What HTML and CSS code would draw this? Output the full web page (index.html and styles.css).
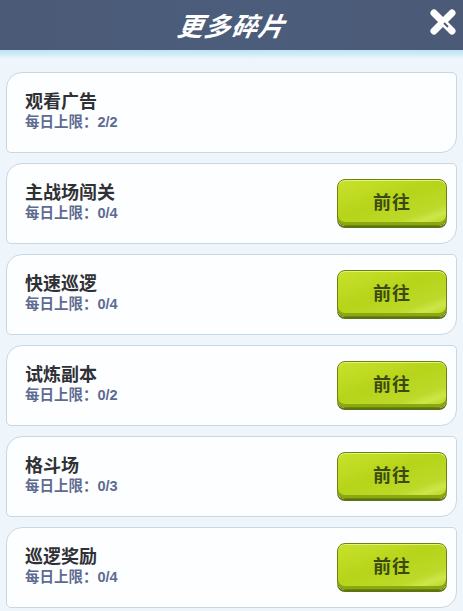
FILE: index.html
```html
<!DOCTYPE html>
<html lang="zh">
<head>
<meta charset="utf-8">
<link rel="stylesheet" href="styles.css">
</head>
<body>
<div class="panel">
  <header class="header">
    <h1 class="title">更多碎片</h1>
    <button class="close" aria-label="关闭">
      <svg width="30" height="28" viewBox="0 0 30 28">
        <path d="M6 5 L24 23" stroke="#fff" stroke-width="7" stroke-linecap="round"/>
        <path d="M24 5 L6 23" stroke="#fff" stroke-width="7" stroke-linecap="round"/>
        <path d="M16 15 L20 19" stroke="#4b5c7a" stroke-width="2"/>
      </svg>
    </button>
  </header>
  <div class="stripe"></div>
  <ul class="list">
    <li class="card">
      <div class="info"><div class="name">观看广告</div><div class="limit">每日上限：2/2</div></div>
    </li>
    <li class="card">
      <div class="info"><div class="name">主战场闯关</div><div class="limit">每日上限：0/4</div></div>
      <button class="go">前往</button>
    </li>
    <li class="card">
      <div class="info"><div class="name">快速巡逻</div><div class="limit">每日上限：0/4</div></div>
      <button class="go">前往</button>
    </li>
    <li class="card">
      <div class="info"><div class="name">试炼副本</div><div class="limit">每日上限：0/2</div></div>
      <button class="go">前往</button>
    </li>
    <li class="card">
      <div class="info"><div class="name">格斗场</div><div class="limit">每日上限：0/3</div></div>
      <button class="go">前往</button>
    </li>
    <li class="card">
      <div class="info"><div class="name">巡逻奖励</div><div class="limit">每日上限：0/4</div></div>
      <button class="go">前往</button>
    </li>
  </ul>
</div>
</body>
</html>
```

FILE: styles.css
```css
* { box-sizing: border-box; }
html, body { margin: 0; padding: 0; }
body {
  width: 463px;
  height: 611px;
  overflow: hidden;
  background: #eef5fb;
  font-family: "Noto Sans CJK SC", "Noto Sans", sans-serif;
}
.panel { display: flex; flex-direction: column; }
.header {
  position: relative;
  height: 50px;
  background: linear-gradient(90deg, #4a5a77 0%, #4c5d7b 50%, #4a5a77 100%);
  display: flex;
  align-items: center;
  justify-content: center;
}
.title {
  margin: 0;
  color: #fff;
  font-size: 26px;
  font-weight: 700;
  font-style: italic;
  letter-spacing: 1px;
  transform: skewX(-10deg);
  margin-left: 2px;
  margin-top: -2px;
}
.close {
  position: absolute;
  right: 4px;
  top: 6px;
  width: 32px;
  height: 32px;
  padding: 0;
  border: 0;
  background: none;
  display: flex;
  align-items: center;
  justify-content: center;
}
.stripe {
  height: 8px;
  background: linear-gradient(180deg, #bfe2f5 0%, #d3ecf8 60%, #e8f4fb 100%);
}
.list {
  list-style: none;
  margin: 0;
  padding: 14px 6px 0 6px;
  display: flex;
  flex-direction: column;
  gap: 10px;
}
.card {
  height: 81px;
  background: #fdfeff;
  border: 1px solid #c9d7e3;
  border-radius: 16px 5px 16px 5px;
  display: flex;
  align-items: center;
  justify-content: space-between;
  padding: 0 9px 5px 18px;
}
.info { display: flex; flex-direction: column; gap: 0; }
.name {
  font-size: 18px;
  font-weight: 700;
  color: #2f3136;
  line-height: 23px;
}
.limit {
  font-family: "Liberation Sans", "Noto Sans CJK SC", sans-serif;
  font-size: 14.5px;
  font-weight: 700;
  color: #5d6b91;
  line-height: 20px;
}
.go {
  width: 110px;
  height: 47px;
  margin-top: 2px;
  border: 1px solid #6b8410;
  border-radius: 8px;
  background: linear-gradient(160deg, #c9e22c 0%, #b6d419 45%, #bdd92a 75%, #cde64a 85%, #b4d116 100%);
  box-shadow: inset 0 -3px 0 #8aa80f, inset 0 1px 0 #e2f27a, 0 2px 0 #5d7210;
  color: #3b4a12;
  font-family: "Noto Sans CJK SC", sans-serif;
  font-size: 18px;
  font-weight: 700;
  padding: 0 0 3px 0;
  letter-spacing: 1px;
}
```
